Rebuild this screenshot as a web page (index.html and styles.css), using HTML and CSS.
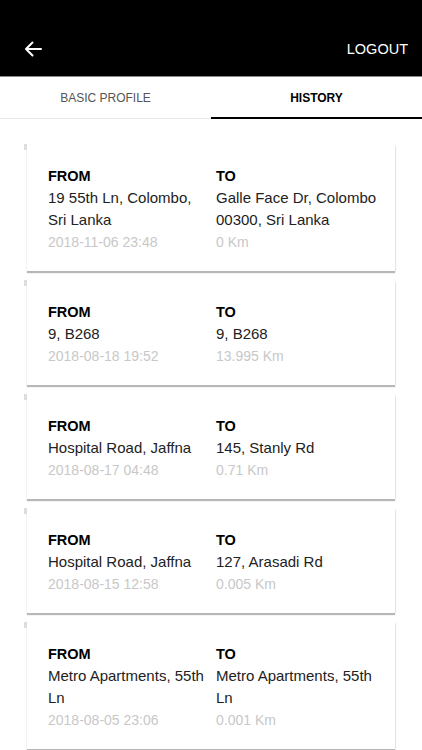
FILE: index.html
```html
<!DOCTYPE html>
<html lang="en">
<head>
    <meta charset="UTF-8">
    <meta name="viewport" content="width=device-width, initial-scale=1.0">
    <title>History</title>
    <link rel="stylesheet" href="styles.css">
</head>
<body>
    <div class="header">
        <svg class="back" width="18" height="16" viewBox="0 0 18 16">
            <path d="M17 8H2M8.5 1.5L2 8l6.5 6.5" fill="none" stroke="#fff" stroke-width="2" stroke-linecap="round" stroke-linejoin="round"/>
        </svg>
        <span class="logout">LOGOUT</span>
    </div>

    <div class="tabs">
        <div class="tab">BASIC PROFILE</div>
        <div class="tab active">HISTORY</div>
    </div>

    <!-- Ride history -->
    <div class="list">
        <div class="card">
            <div class="col">
                <div class="label">FROM</div>
                <div class="place">19 55th Ln, Colombo, Sri Lanka</div>
                <div class="meta">2018-11-06 23:48</div>
            </div>
            <div class="col">
                <div class="label">TO</div>
                <div class="place">Galle Face Dr, Colombo 00300, Sri Lanka</div>
                <div class="meta">0 Km</div>
            </div>
        </div>
        <div class="card">
            <div class="col">
                <div class="label">FROM</div>
                <div class="place">9, B268</div>
                <div class="meta">2018-08-18 19:52</div>
            </div>
            <div class="col">
                <div class="label">TO</div>
                <div class="place">9, B268</div>
                <div class="meta">13.995 Km</div>
            </div>
        </div>
        <div class="card">
            <div class="col">
                <div class="label">FROM</div>
                <div class="place">Hospital Road, Jaffna</div>
                <div class="meta">2018-08-17 04:48</div>
            </div>
            <div class="col">
                <div class="label">TO</div>
                <div class="place">145, Stanly Rd</div>
                <div class="meta">0.71 Km</div>
            </div>
        </div>
        <div class="card">
            <div class="col">
                <div class="label">FROM</div>
                <div class="place">Hospital Road, Jaffna</div>
                <div class="meta">2018-08-15 12:58</div>
            </div>
            <div class="col">
                <div class="label">TO</div>
                <div class="place">127, Arasadi Rd</div>
                <div class="meta">0.005 Km</div>
            </div>
        </div>
        <div class="card">
            <div class="col">
                <div class="label">FROM</div>
                <div class="place">Metro Apartments, 55th Ln</div>
                <div class="meta">2018-08-05 23:06</div>
            </div>
            <div class="col">
                <div class="label">TO</div>
                <div class="place">Metro Apartments, 55th Ln</div>
                <div class="meta">0.001 Km</div>
            </div>
        </div>
    </div>
</body>
</html>
```

FILE: styles.css
```css
body {
    font-family: "Liberation Sans", Arial, sans-serif;
    margin: 0;
    background-color: #fff;
    height: 750px;
    overflow: hidden;
}

.header {
    height: 77px;
    background: #000;
    border-bottom: 1px solid #888;
    display: flex;
    align-items: center;
    justify-content: space-between;
    padding: 22px 14px 0 24px;
    box-sizing: border-box;
}
.back {
    display: block;
}
.logout {
    color: #fff;
    font-size: 14.5px;
}

.tabs {
    display: flex;
    height: 42px;
}
.tab {
    flex: 1;
    display: flex;
    align-items: center;
    justify-content: center;
    font-size: 12px;
    color: #555;
    border-bottom: 1px solid #e6e6e6;
    padding-top: 1px;
}
.tab.active {
    color: #000;
    font-weight: bold;
    border-bottom: 2px solid #000;
    padding-top: 2px;
}

.list {
    padding: 26px 27px 0 27px;
}
.card {
    position: relative;
    display: grid;
    grid-template-columns: 168px 1fr;
    background: #fff;
    padding: 20px 14px 18px 21px;
    margin-bottom: 10px;
    box-shadow: 0 2px 1px rgba(0, 0, 0, 0.28), 1px 0 1px rgba(0, 0, 0, 0.06);
    font-size: 14px;
    line-height: 22px;
}
.card::before {
    content: "";
    position: absolute;
    left: -3px;
    top: -1px;
    width: 3px;
    height: 6px;
    background: #ddd;
}
.label {
    font-weight: bold;
    font-size: 14.5px;
    color: #000;
}
.place {
    color: #222;
    font-size: 15px;
    padding-right: 4px;
}
.meta {
    color: #c8c8c8;
}
```
